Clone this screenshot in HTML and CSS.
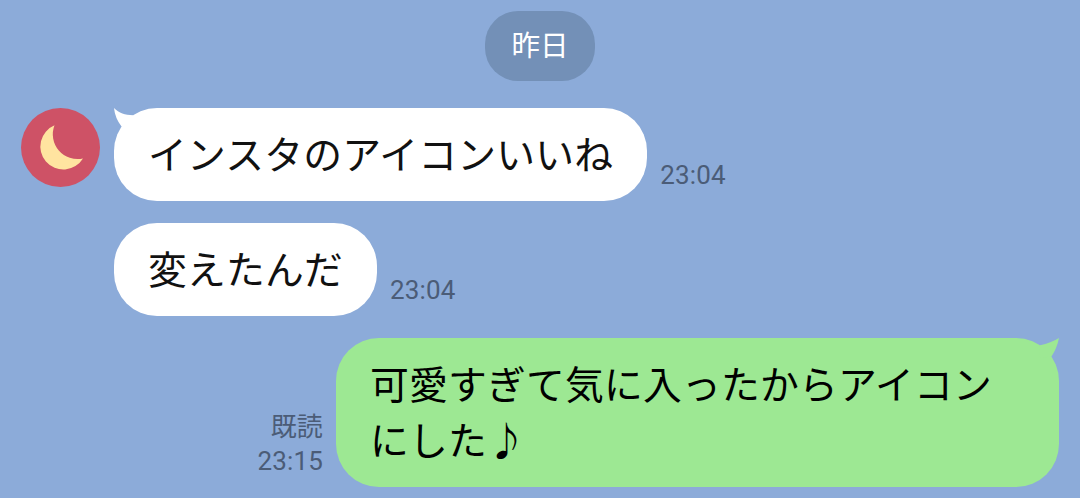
FILE: index.html
```html
<!DOCTYPE html>
<html lang="ja">
<head>
<meta charset="utf-8">
<title>トーク</title>
<link rel="stylesheet" href="styles.css">
</head>
<body>
<main class="chat">
  <div class="date">昨日</div>
  <div class="row">
    <svg class="avatar" viewBox="0 0 79 79"><circle cx="39.500" cy="39.500" r="39.500" fill="#ce5266"/><path d="M33.500 17.300A23 23 0 1 0 62 50.500A24.800 24.800 0 0 1 33.500 17.300Z" fill="#ffe4a0"/></svg>
    <div class="bubble">
      <svg class="tail" viewBox="0 0 28 28"><path d="M0 0C5 5 11 7 19 7.300L20 20L7.500 18.500Q1 10 0 0Z" fill="#fff"/></svg>
      インスタのアイコンいいね
    </div>
    <div class="meta">23:04</div>
  </div>
  <div class="row follow">
    <div class="bubble">変えたんだ</div>
    <div class="meta">23:04</div>
  </div>
  <div class="row sent">
    <div class="meta"><span class="read">既読</span><span>23:15</span></div>
    <div class="bubble">
      <svg class="tail" viewBox="0 0 28 28"><path d="M28 0Q20 5 9 7.300L8 20L20.500 18.500Q26 10 28 0Z" fill="#9de893"/></svg>
      可愛すぎて気に入ったからアイコン<br>にした♪
    </div>
  </div>
</main>
</body>
</html>
```
FILE: styles.css
```css
body {
  margin: 0;
  background: #8cabd9;
  font-family: Roboto, "Noto Sans CJK JP", sans-serif;
}
.chat {
  box-sizing: border-box;
  width: 1080px;
  height: 498px;
  padding: 11px 21px;
  display: flex;
  flex-direction: column;
  overflow: hidden;
}
.date {
  align-self: center;
  width: 110px;
  height: 70px;
  border-radius: 33px;
  background: #7390b7;
  color: #fff;
  font-size: 28.6px;
  line-height: 70px;
  text-align: center;
}
.row {
  display: flex;
  align-items: flex-end;
  margin-top: 27px;
}
.follow {
  margin-top: 22px;
  padding-left: 93px;
}
.avatar {
  width: 79px;
  height: 79px;
  align-self: flex-start;
  margin-right: 14px;
}
.bubble {
  position: relative;
  box-sizing: border-box;
  padding: 20px 34px 17px;
  border-radius: 43px;
  background: #fff;
  color: #111;
  font-size: 38.8px;
  letter-spacing: 0.2px;
  line-height: 56px;
  white-space: nowrap;
}
.meta {
  margin: 0 13px 9px;
  color: #4b5c77;
  font-size: 26px;
  line-height: 34px;
  letter-spacing: 0.15px;
  display: flex;
  flex-direction: column;
  align-items: flex-end;
}
.sent {
  justify-content: flex-end;
  margin-top: 22px;
}
.sent .bubble {
  width: 723px;
  background: #9de893;
  color: #000;
}
.tail {
  position: absolute;
  left: 0;
  top: 0;
  width: 28px;
  height: 28px;
}
.sent .tail {
  left: auto;
  right: 0;
}
```
